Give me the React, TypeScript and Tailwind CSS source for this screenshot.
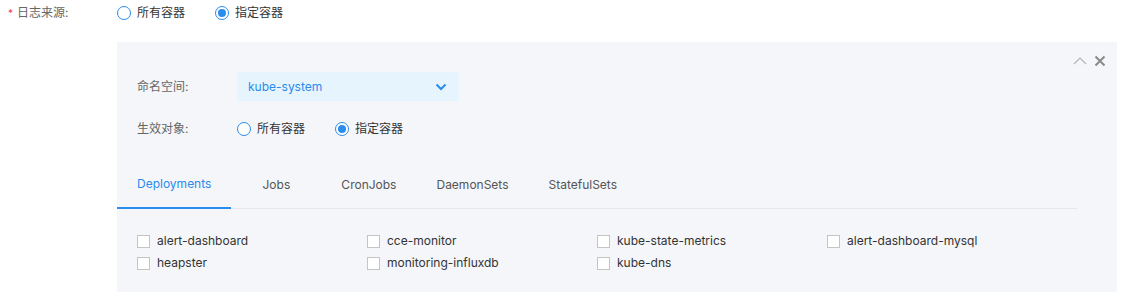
const font = { fontFamily: 'Inter, "Noto Sans CJK SC", sans-serif' };

function Radio({ label, checked }: { label: string; checked?: boolean }) {
  return (
    <label className="flex items-center gap-[6px] text-[12px] text-[#333]">
      <span className="w-[14px] h-[14px] rounded-full border border-[#2a8cec] bg-white flex items-center justify-center">
        {checked && <span className="w-[8px] h-[8px] rounded-full bg-[#2a8cec]" />}
      </span>
      {label}
    </label>
  );
}

const tabs = ['Deployments', 'Jobs', 'CronJobs', 'DaemonSets', 'StatefulSets'];
const items = [
  'alert-dashboard',
  'cce-monitor',
  'kube-state-metrics',
  'alert-dashboard-mysql',
  'heapster',
  'monitoring-influxdb',
  'kube-dns',
];

export default function App() {
  return (
    <div className="w-[1146px] h-[301px] bg-white" style={font}>
      {/* 日志来源 */}
      <div className="flex items-center h-[26px]">
        <div className="w-[117px] pl-[8px] flex items-center text-[12px] text-[#666]">
          <span className="text-[#e5484d] text-[10px] mr-[4px]">*</span>
          日志来源:
        </div>
        <div className="flex items-center gap-[30px]">
          <Radio label="所有容器" />
          <Radio label="指定容器" checked />
        </div>
      </div>

      {/* panel */}
      <div className="relative ml-[117px] mt-[16px] w-[1000px] h-[250px] bg-[#f4f6fa] pt-[30px]">
        <div className="absolute top-[13px] right-[11px] flex items-center gap-[6px]">
          <svg width="16" height="10" viewBox="0 0 16 10" fill="none">
            <path d="M2 8 L8 2 L14 8" stroke="#b3b3b3" strokeWidth="1.2" />
          </svg>
          <svg width="12" height="12" viewBox="0 0 12 12" fill="none">
            <path d="M1.5 1.5 L10.5 10.5 M10.5 1.5 L1.5 10.5" stroke="#8a8a8a" strokeWidth="2" />
          </svg>
        </div>

        <div className="pl-[20px]">
          <div className="flex items-center h-[29px]">
            <span className="w-[100px] text-[12px] text-[#666]">命名空间:</span>
            <div className="w-[222px] h-[29px] bg-[#e6f4fe] flex items-center justify-between pl-[11px] pr-[12px] text-[12px] text-[#2a8cec]">
              kube-system
              <svg width="12" height="8" viewBox="0 0 12 8" fill="none">
                <path d="M1.5 1.5 L6 6 L10.5 1.5" stroke="#2a8cec" strokeWidth="2" />
              </svg>
            </div>
          </div>
          <div className="flex items-center h-[20px] mt-[18px]">
            <span className="w-[100px] text-[12px] text-[#666]">生效对象:</span>
            <div className="flex items-center gap-[30px]">
              <Radio label="所有容器" />
              <Radio label="指定容器" checked />
            </div>
          </div>
        </div>

        {/* tabs */}
        <div className="mt-[30px] mr-[40px] flex border-b border-[#e4e7ec] h-[40px]">
          {tabs.map((t, i) => (
            <div
              key={t}
              className={
                i === 0
                  ? 'min-w-[90px] px-[20px] pb-[8px] flex items-center justify-center text-[12px] text-[#2a8cec] border-b-2 border-[#2a8cec] -mb-px'
                  : 'min-w-[90px] px-[20px] pb-[8px] flex items-center justify-center text-[12px] text-[#555]'
              }
            >
              {t}
            </div>
          ))}
        </div>

        {/* checkboxes */}
        <div className="grid grid-cols-[230px_230px_230px_230px] gap-y-[2px] pl-[20px] mt-[22px]">
          {items.map((it) => (
            <label key={it} className="flex items-center h-[20px] gap-[7px] text-[12px] text-[#333]">
              <span className="w-[13px] h-[13px] border border-[#c4c4c4] bg-white" />
              {it}
            </label>
          ))}
        </div>
      </div>
    </div>
  );
}
